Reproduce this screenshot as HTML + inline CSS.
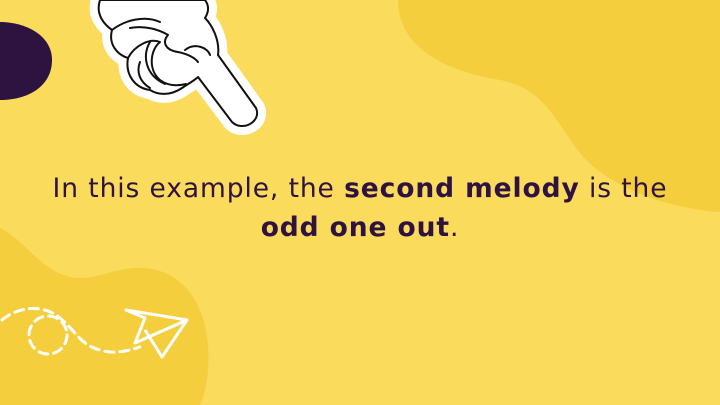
<!DOCTYPE html>
<html><head><style>
html,body{margin:0;padding:0}
body{width:720px;height:405px;overflow:hidden;background:#FBDB5C;position:relative;font-family:"DejaVu Sans","Liberation Sans",sans-serif}
svg{position:absolute;left:0;top:0}
.t{position:absolute;left:0;width:720px;text-align:center;color:#2E1240;font-size:26.5px;letter-spacing:0.9px}
b{font-weight:bold}
</style></head><body>
<svg width="720" height="405" viewBox="0 0 720 405">
<path d="M398,0 C398,45 440,70 500,80 C555,90 560,140 595,168 C635,200 690,210 720,212 L720,0 Z" fill="#F5CE3E"/>
<path d="M0,228 C25,240 40,270 70,277 C95,282 115,266 145,268 C185,272 205,305 208,345 C210,375 205,395 200,405 L0,405 Z" fill="#F5CE3E"/>
<path d="M0,22 C25,22 52,35 52,60 C52,85 30,100 0,100 Z" fill="#2E1240"/>
<g stroke="#fff" stroke-width="3" fill="none" stroke-dasharray="9,6" stroke-linecap="round">
<path d="M2,320 C20,305 45,305 60,318 C75,330 80,345 100,350 C115,355 130,350 140,347"/>
<circle cx="48" cy="335" r="19"/>
</g>
<g stroke="#fff" stroke-width="3" fill="none" stroke-linejoin="round">
<path d="M126,310 L187,320 L135,343 L145,318 Z"/>
<path d="M145,330 L162,357 L187,320"/>
</g>
<g stroke-linejoin="round" stroke-linecap="round">
<path d="M100,0 C95,15 105,25 112,30 C108,45 118,55 128,58 C125,75 135,88 150,90 C158,95 170,96 182,88 C188,84 195,80 198,77 L232,122 C242,132 262,122 256,108 L218,55 C220,40 212,25 205,18 C210,10 208,4 205,0 Z" fill="#fff" stroke="#fff" stroke-width="18"/>
<path d="M100,0 C95,15 105,25 112,30 C108,45 118,55 128,58 C125,75 135,88 150,90 C158,95 170,96 182,88 C188,84 195,80 198,77 L232,122 C242,132 262,122 256,108 L218,55 C220,40 212,25 205,18 C210,10 208,4 205,0 Z" fill="#fff" stroke="#111" stroke-width="2"/>
<path d="M112,30 C125,20 145,15 160,22 M130,28 C145,25 160,30 168,35 M128,58 C135,45 150,38 160,42 C150,50 148,70 160,80 C168,86 178,86 186,84 M150,42 C142,55 145,75 165,84 M168,35 C162,42 165,50 178,52 C188,54 195,58 198,62 M185,50 C195,42 208,48 210,55 M140,62 C136,72 140,82 150,88" fill="none" stroke="#111" stroke-width="2"/>
</g>
</svg>
<div class="t" style="top:173px">In this example, the <b>second melody</b> is the</div>
<div class="t" style="top:212px"><b>odd one out</b>.</div>
</body></html>
